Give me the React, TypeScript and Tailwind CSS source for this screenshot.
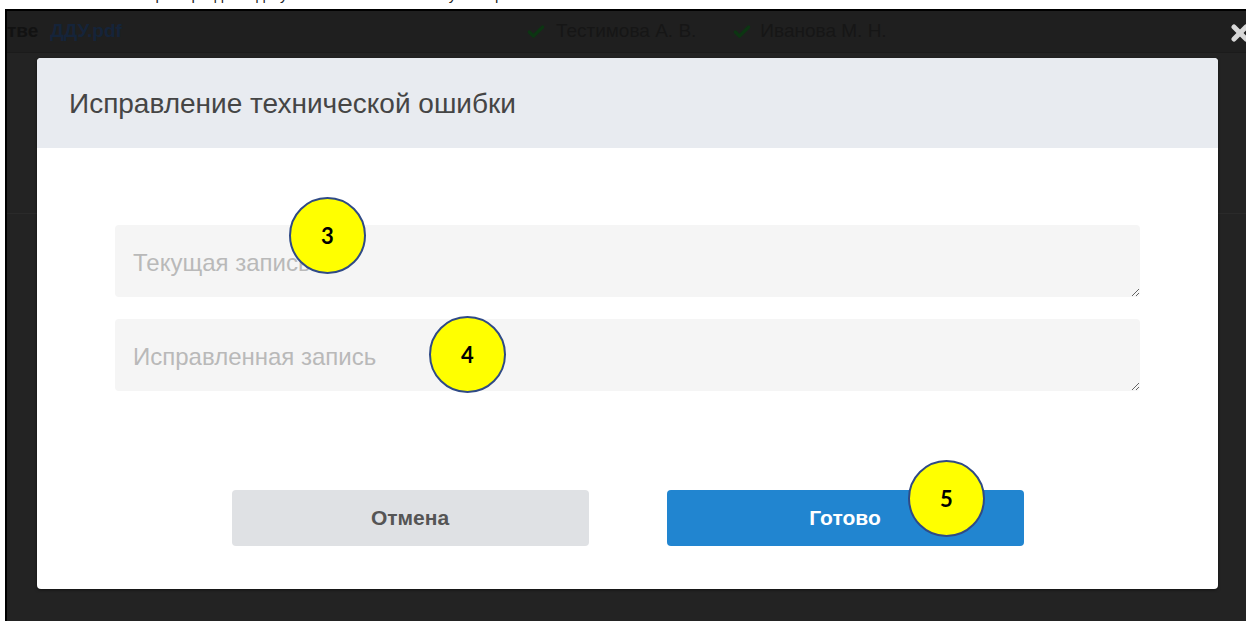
import { X, Check } from "lucide-react";

const sans = { fontFamily: '"Liberation Sans", Arial, sans-serif' };

/** Numbered yellow callout used to mark steps on the form */
function Callout({ n, className }: { n: number; className: string }) {
  return (
    <div
      className={`absolute flex h-[77px] w-[77px] items-center justify-center rounded-full border-2 border-[#2f4a86] bg-[#ffff00] text-[22px] font-bold text-black ${className}`}
      style={{ fontFamily: 'Lato, "Open Sans", sans-serif' }}
    >
      {n}
    </div>
  );
}

function Field({ placeholder }: { placeholder: string }) {
  return (
    <textarea
      placeholder={placeholder}
      className="block h-[72px] w-full resize-y rounded-[4px] bg-[#f5f5f5] px-[18px] pb-[20px] pt-[24px] text-[24px] leading-[28px] text-[#444] outline-none placeholder:text-[#b9b9b9]"
      style={sans}
    />
  );
}

export default function App() {
  return (
    <div className="h-[621px] w-[1246px] overflow-hidden bg-white" style={sans}>
      {/* caption line above the frame, only its lower edge shows */}
      <div className="h-[9px] overflow-hidden pl-[118px]">
        <p className="-mt-[14px] text-[15px] leading-[18px] text-[#222]">
          Выберите раздел в документе и нажмите кнопку «Исправить запись»
        </p>
      </div>

      <div className="relative ml-[5px] h-[612px] border-l-2 border-t-2 border-black bg-[#232323]">
        {/* dimmed page behind the dialog */}
        <div className="flex h-[42px] items-center border-b border-[#1b1b1b] bg-[#1f1f1f] text-[19px]">
          <span className="font-bold text-[#121212]">тве</span>
          <span className="ml-[12px] font-bold text-[#15243a]">ДДУ.pdf</span>
          <span className="ml-[404px] flex items-center gap-[10px] text-[#161616]">
            <Check size={20} strokeWidth={4} className="text-[#0c3512]" />
            Тестимова А. В.
          </span>
          <span className="ml-[36px] flex items-center gap-[8px] text-[#161616]">
            <Check size={20} strokeWidth={4} className="text-[#0c3512]" />
            Иванова М. Н.
          </span>
        </div>
        <div className="h-[161px] border-b border-[#2a2a2a]" />

        <X
          size={24}
          strokeWidth={5}
          className="absolute right-[-6px] top-[10px] text-[#d8d8d8]"
        />

        {/* dialog */}
        <div className="absolute left-[30px] top-[47px] flex h-[531px] w-[1181px] flex-col overflow-hidden rounded-[4px] bg-white shadow-[0_1px_3px_rgba(0,0,0,0.5)]">
          <div className="flex h-[90px] shrink-0 items-center bg-[#e8ebf0] px-[32px]">
            <h2 className="pt-[2px] text-[28px] text-[#454545]">Исправление технической ошибки</h2>
          </div>

          <div className="flex flex-col gap-[22px] px-[78px] pt-[77px]">
            <Field placeholder="Текущая запись" />
            <Field placeholder="Исправленная запись" />
          </div>

          <div className="mt-[99px] flex justify-center gap-[78px]">
            <button className="h-[56px] w-[357px] rounded-[4px] bg-[#dfe1e4] text-[21px] font-bold text-[#555]">
              Отмена
            </button>
            <button className="h-[56px] w-[357px] rounded-[4px] bg-[#2185d0] text-[21px] font-bold text-white">
              Готово
            </button>
          </div>
        </div>

        <Callout n={3} className="left-[282px] top-[186px]" />
        <Callout n={4} className="left-[422px] top-[305px]" />
        <Callout n={5} className="left-[901px] top-[449px]" />
      </div>
    </div>
  );
}
